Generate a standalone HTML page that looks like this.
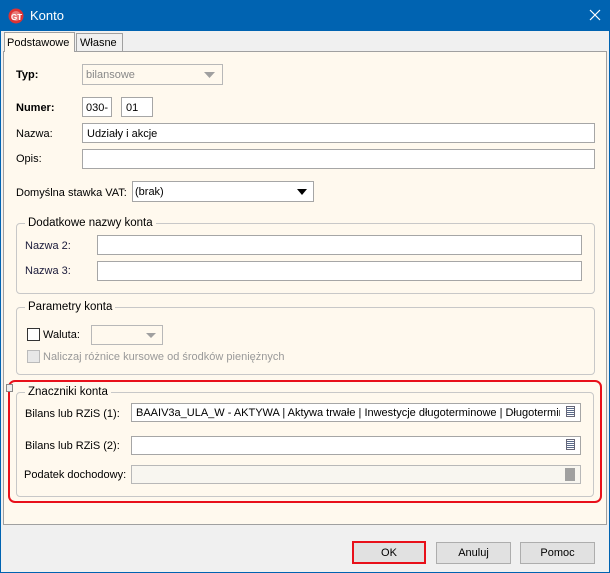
<!DOCTYPE html>
<html><head><meta charset="utf-8"><style>
*{box-sizing:border-box;margin:0;padding:0}
body{width:610px;height:573px;position:relative;background:#f0f0f0;font:11px "Liberation Sans",sans-serif;color:#000;overflow:hidden}
.a{position:absolute}
.lbl{position:absolute;line-height:14px;white-space:nowrap}
.inp{position:absolute;background:#fff;border:1px solid #a6a6a6}
.grp{position:absolute;border:1px solid #c8c8c8;border-radius:4px}
.leg{position:absolute;background:#fff9ee;padding:0 3px;line-height:14px;font-size:11.5px}
.btn{position:absolute;background:#e1e1e1;border:1px solid #adadad;text-align:center;line-height:20px}
.lst{position:absolute;width:9px;height:11px;border:1px solid #667;background:repeating-linear-gradient(#fff 0 1px,#5a6a8a 1px 2px)}
</style></head><body>
<div class="a" style="left:0;top:0;width:610px;height:31px;background:#0063b1"></div>
<div class="a" style="left:0;top:31px;width:1px;height:542px;background:#0063b1"></div>
<div class="a" style="right:0;top:31px;width:1px;height:542px;background:#0063b1"></div>
<div class="a" style="left:0;bottom:0;width:610px;height:1px;background:#0063b1"></div>
<svg class="a" style="left:8px;top:8px" width="16" height="16"><circle cx="8" cy="8" r="7.5" fill="#d33"/><circle cx="8" cy="8" r="5" fill="#fff" opacity=".35"/><text x="3" y="12" font-size="8" font-weight="bold" fill="#fff" font-family="Liberation Sans">GT</text></svg>
<div class="lbl" style="left:30px;top:9px;color:#fff;font-size:13px">Konto</div>
<svg class="a" style="left:589px;top:9px" width="12" height="12"><path d="M1 1L11 11M11 1L1 11" stroke="#fff" stroke-width="1.2"/></svg>

<div class="a" style="left:3px;top:51px;width:604px;height:474px;background:#fff9ee;border:1px solid #a0a0a0"></div>
<div class="a" style="left:4px;top:32px;width:71px;height:20px;background:#fff9ee;border:1px solid #a0a0a0;border-bottom:none"></div>
<div class="lbl" style="left:7px;top:36px">Podstawowe</div>
<div class="a" style="left:76px;top:33px;width:47px;height:18px;border:1px solid #a0a0a0;border-bottom:none;background:#f0f0f0"></div>
<div class="lbl" style="left:80px;top:36px">Własne</div>

<div class="lbl" style="left:16px;top:68px;font-weight:bold">Typ:</div>
<div class="a" style="left:82px;top:64px;width:141px;height:21px;border:1px solid #b8b8b8;background:#fff9ee"></div>
<div class="lbl" style="left:86px;top:68px;color:#888">bilansowe</div>
<svg class="a" style="left:204px;top:72px" width="11" height="6"><path d="M0 0H11L5.5 6Z" fill="#a0a0a0"/></svg>

<div class="lbl" style="left:16px;top:101px;font-weight:bold">Numer:</div>
<div class="inp" style="left:82px;top:97px;width:30px;height:20px"></div>
<div class="lbl" style="left:86px;top:101px">030-</div>
<div class="inp" style="left:121px;top:97px;width:32px;height:20px"></div>
<div class="lbl" style="left:126px;top:101px">01</div>

<div class="lbl" style="left:16px;top:127px">Nazwa:</div>
<div class="inp" style="left:82px;top:123px;width:513px;height:20px"></div>
<div class="lbl" style="left:87px;top:127px">Udziały i akcje</div>
<div class="lbl" style="left:16px;top:152px">Opis:</div>
<div class="inp" style="left:82px;top:149px;width:513px;height:20px"></div>

<div class="lbl" style="left:16px;top:186px">Domyślna stawka VAT:</div>
<div class="inp" style="left:132px;top:181px;width:182px;height:21px;background:#fff"></div>
<div class="lbl" style="left:135px;top:185px">(brak)</div>
<svg class="a" style="left:297px;top:189px" width="10" height="6"><path d="M0 0H10L5 6Z" fill="#000"/></svg>

<div class="grp" style="left:16px;top:223px;width:579px;height:71px"></div>
<div class="leg" style="left:25px;top:216px">Dodatkowe nazwy konta</div>
<div class="lbl" style="left:25px;top:239px;color:#1a1a3a">Nazwa 2:</div>
<div class="inp" style="left:97px;top:235px;width:485px;height:20px"></div>
<div class="lbl" style="left:25px;top:264px;color:#1a1a3a">Nazwa 3:</div>
<div class="inp" style="left:97px;top:261px;width:485px;height:20px"></div>

<div class="grp" style="left:16px;top:307px;width:579px;height:68px"></div>
<div class="leg" style="left:25px;top:300px">Parametry konta</div>
<div class="a" style="left:27px;top:328px;width:13px;height:13px;border:1px solid #333;background:#fff"></div>
<div class="lbl" style="left:43px;top:328px">Waluta:</div>
<div class="a" style="left:91px;top:325px;width:72px;height:20px;border:1px solid #b8b8b8"></div>
<svg class="a" style="left:146px;top:333px" width="10" height="5"><path d="M0 0H10L5 5Z" fill="#a0a0a0"/></svg>
<div class="a" style="left:27px;top:350px;width:13px;height:13px;border:1px solid #bbb;background:#e8e8e8"></div>
<div class="lbl" style="left:43px;top:350px;color:#999">Naliczaj różnice kursowe od środków pieniężnych</div>

<div class="a" style="left:8px;top:380px;width:594px;height:123px;border:2px solid #e8101a;border-radius:7px"></div>
<div class="a" style="left:6px;top:384px;width:7px;height:8px;border:1px solid #888;background:#eee"></div>
<div class="grp" style="left:16px;top:392px;width:578px;height:105px"></div>
<div class="leg" style="left:25px;top:385px">Znaczniki konta</div>
<div class="lbl" style="left:25px;top:407px">Bilans lub RZiS (1):</div>
<div class="inp" style="left:131px;top:403px;width:450px;height:19px;overflow:hidden"></div>
<div class="lbl" style="left:136px;top:406px;width:424px;overflow:hidden">BAAIV3a_ULA_W - AKTYWA | Aktywa trwałe | Inwestycje długoterminowe | Długoterminowe</div>
<div class="lst" style="left:566px;top:406px"></div>
<div class="lbl" style="left:25px;top:439px">Bilans lub RZiS (2):</div>
<div class="inp" style="left:131px;top:436px;width:450px;height:19px"></div>
<div class="lst" style="left:566px;top:439px"></div>
<div class="lbl" style="left:24px;top:468px">Podatek dochodowy:</div>
<div class="inp" style="left:131px;top:465px;width:450px;height:19px;background:#f8f6f0;border-color:#b8b8b8"></div>
<div class="a" style="left:565px;top:468px;width:10px;height:13px;background:#a0a0a0"></div>

<div class="btn" style="left:352px;top:541px;width:74px;height:23px;border:2px solid #e8101a">OK</div>
<div class="btn" style="left:436px;top:542px;width:75px;height:22px">Anuluj</div>
<div class="btn" style="left:520px;top:542px;width:75px;height:22px">Pomoc</div>
</body></html>
